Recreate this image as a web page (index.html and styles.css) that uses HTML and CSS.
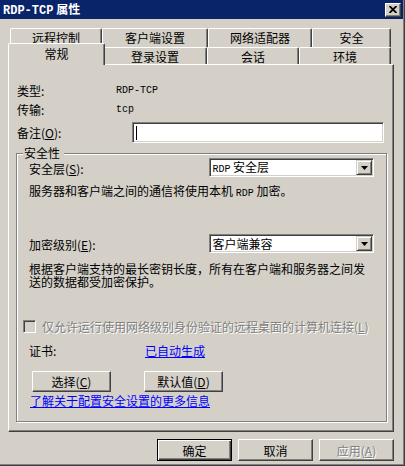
FILE: index.html
```html
<!DOCTYPE html>
<html lang="zh-CN">
<head>
    <meta charset="UTF-8">
    <title>RDP-TCP 属性</title>
    <link rel="stylesheet" href="styles.css">
</head>
<body>
    <div class="window">
        <div class="titlebar">
            <div class="title"><span class="title-latin">RDP-TCP</span> 属性</div>
            <div class="close-btn">
                <svg width="8" height="7" viewBox="0 0 8 7">
                    <path d="M0.5 0 L7.5 7 M7.5 0 L0.5 7" stroke="#000" stroke-width="1.8"/>
                </svg>
            </div>
        </div>

        <div class="tabs">
            <div class="tab-row back">
                <div class="tab tab-remote">远程控制</div>
                <div class="tab tab-client">客户端设置</div>
                <div class="tab tab-adapter">网络适配器</div>
                <div class="tab tab-security">安全</div>
            </div>
            <div class="tab-row front">
                <div class="tab tab-general active">常规</div>
                <div class="tab tab-logon">登录设置</div>
                <div class="tab tab-session">会话</div>
                <div class="tab tab-env">环境</div>
            </div>
        </div>

        <div class="panel">
            <div class="info-row">
                <div class="info-label">类型:</div>
                <div class="latin">RDP-TCP</div>
            </div>
            <div class="info-row">
                <div class="info-label">传输:</div>
                <div class="latin">tcp</div>
            </div>
            <div class="comment-row">
                <div class="comment-label">备注(<u>O</u>):</div>
                <div class="textbox"><span class="caret"></span></div>
            </div>

            <fieldset class="group">
                <legend>安全性</legend>

                <div class="field-row">
                    <div class="field-label">安全层(<u>S</u>):</div>
                    <div class="combo">
                        <span class="combo-text"><span class="latin">RDP</span> 安全层</span>
                        <div class="drop-btn">
                            <svg width="7" height="4" viewBox="0 0 7 4"><polygon points="0,0 7,0 3.5,4" fill="#000"/></svg>
                        </div>
                    </div>
                </div>
                <div class="note first-note">服务器和客户端之间的通信将使用本机 <span class="latin">RDP</span> 加密。</div>

                <div class="field-row enc-row">
                    <div class="field-label">加密级别(<u>E</u>):</div>
                    <div class="combo">
                        <span class="combo-text">客户端兼容</span>
                        <div class="drop-btn">
                            <svg width="7" height="4" viewBox="0 0 7 4"><polygon points="0,0 7,0 3.5,4" fill="#000"/></svg>
                        </div>
                    </div>
                </div>
                <div class="note second-note">根据客户端支持的最长密钥长度，所有在客户端和服务器之间发送的数据都受加密保护。</div>

                <div class="check-row">
                    <span class="checkbox"></span>
                    <span class="disabled-text">仅允许运行使用网络级别身份验证的远程桌面的计算机连接(<u>L</u>)</span>
                </div>

                <div class="cert-row">
                    <div class="cert-label">证书:</div>
                    <a class="link" href="#">已自动生成</a>
                </div>

                <div class="btn-row">
                    <div class="btn">选择(<u>C</u>)</div>
                    <div class="btn">默认值(<u>D</u>)</div>
                </div>

                <a class="link more-link" href="#">了解关于配置安全设置的更多信息</a>
            </fieldset>
        </div>

        <div class="footer">
            <div class="btn dialog-btn default">确定</div>
            <div class="btn dialog-btn">取消</div>
            <div class="btn dialog-btn disabled">应用(<u>A</u>)</div>
        </div>
    </div>
</body>
</html>
```

FILE: styles.css
```css
* {
    margin: 0;
    padding: 0;
    box-sizing: border-box;
}

body {
    background: #d4d0c8;
    font-family: "Noto Sans CJK SC", "Noto Sans", sans-serif;
    font-size: 12px;
    color: #000;
}

.window {
    width: 405px;
    height: 466px;
    background: #d4d0c8;
    border-right: 1px solid #404040;
    border-bottom: 1px solid #404040;
    padding-right: 1px;
    padding-bottom: 1px;
    box-shadow: inset -1px -1px 0 #808080;
    display: flex;
    flex-direction: column;
}

.latin {
    font-family: "Liberation Mono", monospace;
    font-size: 10px;
}

/* title bar */
.titlebar {
    height: 19px;
    background: #0a246a;
    display: flex;
    align-items: center;
    justify-content: space-between;
    padding: 0 2px 0 3px;
}

.title {
    color: #fff;
    font-weight: 700;
    font-size: 12px;
    line-height: 19px;
}

.title-latin {
    font-family: "Liberation Mono", monospace;
    font-weight: 700;
}

.close-btn {
    width: 16px;
    height: 14px;
    background: #d4d0c8;
    border-top: 1px solid #fff;
    border-left: 1px solid #fff;
    border-right: 1px solid #404040;
    border-bottom: 1px solid #404040;
    box-shadow: inset -1px -1px 0 #808080;
    display: flex;
    align-items: center;
    justify-content: center;
    padding-bottom: 1px;
}

/* tabs */
.tabs {
    margin-top: 9px;
    padding-left: 10px;
}

.tab-row {
    display: flex;
    align-items: flex-end;
}

.tab-row.back {
    height: 19px;
}

.tab-row.front {
    height: 17px;
}

.tab {
    height: 100%;
    background: #d4d0c8;
    border-top: 1px solid #fff;
    border-left: 1px solid #fff;
    border-right: 1px solid #404040;
    border-radius: 2px 2px 0 0;
    box-shadow: inset -1px 0 0 #808080;
    text-align: center;
    line-height: 17px;
}

.tab-row.front .tab {
    padding-top: 1px;
    line-height: 15px;
}

.tab-remote { width: 92px; }
.tab-client { width: 106px; }
.tab-adapter { width: 104px; }
.tab-security { width: 79px; }
.tab-general { width: 93px; }
.tab-logon { width: 104px; }
.tab-session { width: 92px; }
.tab-env { width: 92px; }

.tab-row.front .tab.active {
    position: relative;
    z-index: 1;
    height: 22px;
    width: 97px;
    margin: 0 -2px -1px -2px;
    padding-top: 1px;
    line-height: 18px;
}

/* page panel */
.panel {
    margin-left: 8px;
    width: 386px;
    background: #d4d0c8;
    border-top: 1px solid #fff;
    border-left: 1px solid #fff;
    border-right: 1px solid #404040;
    border-bottom: 1px solid #404040;
    box-shadow: inset -1px -1px 0 #808080;
    padding: 16px 0 9px 7px;
}

.info-row {
    display: flex;
    align-items: center;
    height: 19px;
    padding-left: 1px;
}

.info-label {
    width: 99px;
}

.comment-row {
    display: flex;
    align-items: center;
    margin-top: 3px;
    height: 21px;
    padding-left: 1px;
}

.comment-label {
    width: 115px;
}

.textbox {
    width: 252px;
    height: 21px;
    background: #fff;
    border-top: 1px solid #808080;
    border-left: 1px solid #808080;
    border-right: 1px solid #fff;
    border-bottom: 1px solid #fff;
    box-shadow: inset 1px 1px 0 #404040, inset -1px -1px 0 #d4d0c8;
    padding: 3px 0 0 3px;
}

.caret {
    display: block;
    width: 1px;
    height: 14px;
    background: #000;
}

/* group box */
.group {
    margin-top: 5px;
    width: 371px;
    border: 1px solid #808080;
    box-shadow: 1px 1px 0 #fff, inset 1px 1px 0 #fff;
    padding: 0 12px 13px 12px;
    min-inline-size: 0;
}

.group legend {
    margin-left: -6px;
    padding: 0 4px 0 1px;
    line-height: 10px;
    background: #d4d0c8;
}

.field-row {
    display: flex;
    align-items: center;
    height: 19px;
}

.field-label {
    width: 182px;
    line-height: 13px;
    padding-top: 2px;
}

.combo {
    width: 166px;
    height: 19px;
    background: #fff;
    border-top: 1px solid #808080;
    border-left: 1px solid #808080;
    border-right: 1px solid #fff;
    border-bottom: 1px solid #fff;
    box-shadow: inset 1px 1px 0 #404040, inset -1px -1px 0 #d4d0c8;
    display: flex;
    align-items: center;
    justify-content: space-between;
    padding: 1px 1px 1px 2px;
}

.combo-text {
    line-height: 15px;
}

.drop-btn {
    width: 16px;
    height: 15px;
    background: #d4d0c8;
    border-top: 1px solid #d4d0c8;
    border-left: 1px solid #d4d0c8;
    border-right: 1px solid #404040;
    border-bottom: 1px solid #404040;
    box-shadow: inset 1px 1px 0 #fff, inset -1px -1px 0 #808080;
    display: flex;
    align-items: center;
    justify-content: center;
}

.note {
    line-height: 13px;
}

.first-note {
    margin-top: 7px;
}

.enc-row {
    margin-top: 34px;
}

.second-note {
    margin-top: 9px;
}

.check-row {
    display: flex;
    align-items: center;
    gap: 6px;
    margin-top: 31px;
    margin-left: -6px;
    height: 15px;
}

.checkbox {
    width: 13px;
    height: 13px;
    background: #d4d0c8;
    border-top: 1px solid #808080;
    border-left: 1px solid #808080;
    border-right: 1px solid #fff;
    border-bottom: 1px solid #fff;
    box-shadow: inset 1px 1px 0 #404040, inset -1px -1px 0 #d4d0c8;
}

.disabled-text {
    color: #808080;
    text-shadow: 1px 1px 0 #fff;
    white-space: nowrap;
}

.cert-row {
    display: flex;
    align-items: center;
    margin-top: 9px;
    height: 15px;
}

.cert-label {
    width: 116px;
}

.link {
    color: #0000ff;
    text-decoration: underline;
}

.btn-row {
    display: flex;
    gap: 33px;
    margin-top: 13px;
    margin-left: 3px;
}

.btn {
    width: 79px;
    height: 21px;
    background: #d4d0c8;
    border-top: 1px solid #fff;
    border-left: 1px solid #fff;
    border-right: 1px solid #404040;
    border-bottom: 1px solid #404040;
    box-shadow: inset -1px -1px 0 #808080;
    display: flex;
    align-items: center;
    justify-content: center;
    line-height: 15px;
}

.more-link {
    display: block;
    margin-top: 2px;
    margin-left: 1px;
    line-height: 14px;
}

/* dialog buttons */
.footer {
    display: flex;
    justify-content: flex-end;
    gap: 6px;
    margin-top: 7px;
    padding-right: 9px;
}

.dialog-btn {
    width: 75px;
    height: 22px;
}

.dialog-btn.default {
    border: 1px solid #000;
    box-shadow: inset 1px 1px 0 #fff, inset -1px -1px 0 #404040, inset -2px -2px 0 #808080;
}

.dialog-btn.disabled {
    color: #808080;
    text-shadow: 1px 1px 0 #fff;
}
```
